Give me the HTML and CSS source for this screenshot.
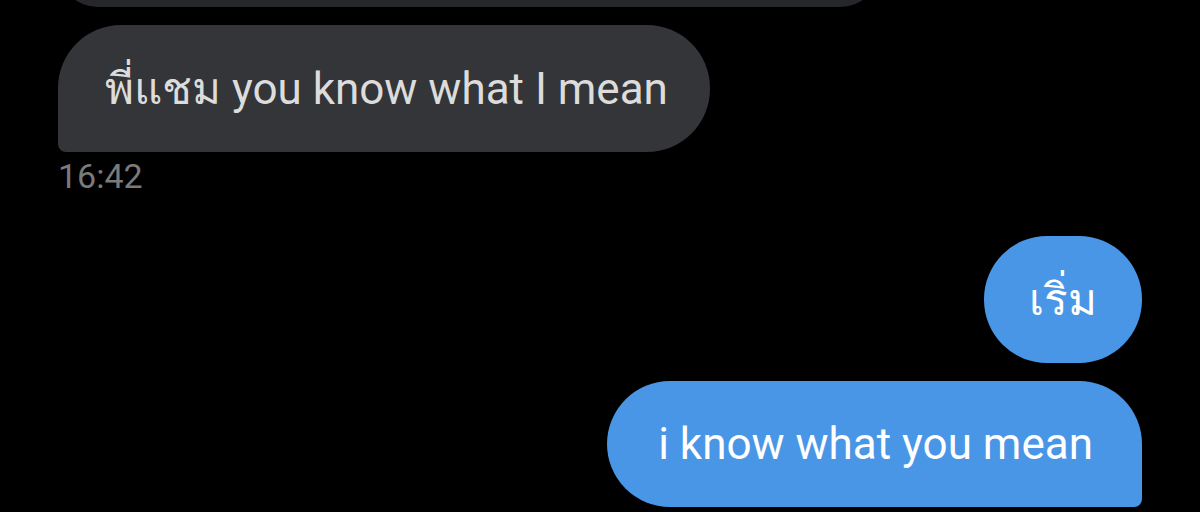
FILE: index.html
```html
<!DOCTYPE html>
<html lang="th">
<head>
<meta charset="utf-8">
<title>Chat</title>
<link rel="stylesheet" href="styles.css">
</head>
<body>
<div class="chat">
  <div class="bubble-prev"></div>
  <div class="bubble in">พี่แชม you know what I mean</div>
  <div class="time">16:42</div>
  <div class="bubble out first">เริ่ม</div>
  <div class="bubble out last">i know what you mean</div>
</div>
</body>
</html>
```
FILE: styles.css
```css
html, body {
  margin: 0;
  padding: 0;
  background: #000;
  height: 512px;
  overflow: hidden;
}

.chat {
  display: flex;
  flex-direction: column;
  padding: 0 58px;
  font-family: Roboto, "Noto Sans", "DejaVu Sans", sans-serif;
}

.bubble-prev {
  align-self: flex-start;
  width: 822px;
  height: 80px;
  margin-top: -73px;
  border-radius: 40px;
  background: #26272b;
}

.bubble {
  display: flex;
  align-items: center;
  height: 127px;
  box-sizing: border-box;
  font-size: 44px;
  line-height: 1;
  white-space: nowrap;
}

.bubble.in {
  align-self: flex-start;
  margin-top: 18px;
  padding: 0 42px 0 47px;
  background: #333538;
  color: #dcdcdc;
  border-radius: 63px 63px 63px 8px;
}

.time {
  margin-top: 5px;
  font-size: 34px;
  line-height: 38px;
  color: #7a7a7a;
}

.bubble.out {
  align-self: flex-end;
  background: #4a96e6;
  color: #fff;
}

.bubble.out.first {
  margin-top: 41px;
  padding: 0 45px;
  border-radius: 63px;
}

.bubble.out.last {
  margin-top: 18px;
  height: 126px;
  padding: 0 49px 0 51px;
  border-radius: 63px 63px 8px 63px;
}
```
